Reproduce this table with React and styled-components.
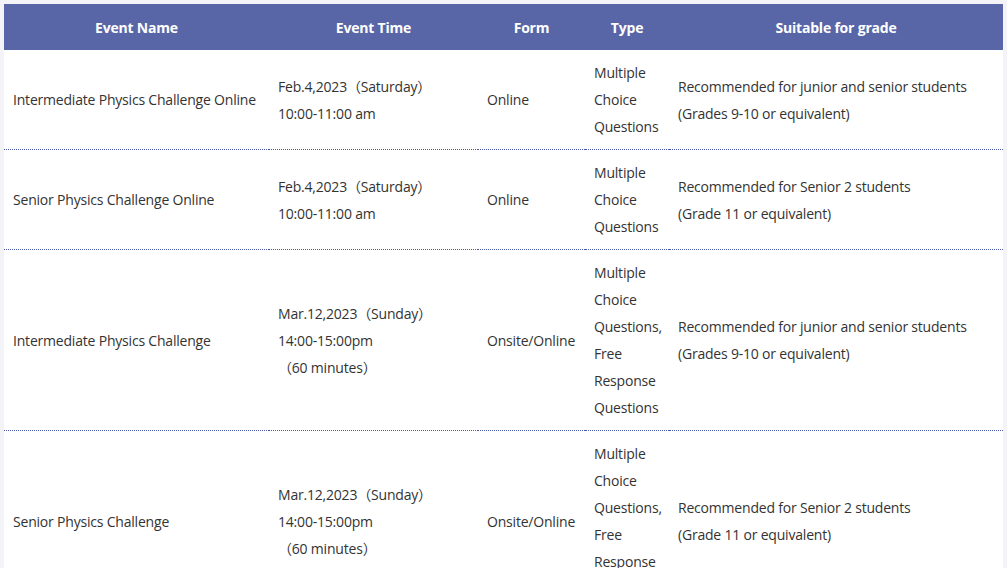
import React from 'react'
import styled, { createGlobalStyle } from 'styled-components'

const GlobalStyle = createGlobalStyle`
    body {
        margin: 4px;
        background: #f3f3f8;
        font-family: "Open Sans", "Noto Sans", "Noto Sans CJK SC", sans-serif;
    }
`

const Table = styled.table`
    width: 999px;
    border-collapse: collapse;
    table-layout: fixed;
    background: #ffffff;
    font-size: 14px;
    letter-spacing: -0.2px;
    color: #333333;
`

const HeadCell = styled.th`
    box-sizing: border-box;
    width: ${(p) => p.w}px;
    height: 46px;
    padding: 0 9px;
    background: #5866a8;
    color: #ffffff;
    font-weight: bold;
    text-align: center;
    vertical-align: middle;
`

const Cell = styled.td`
    padding: 9px;
    line-height: 27px;
    vertical-align: middle;
    border-bottom: 1px dotted #4a5aa8;
`

const columns = [
    { title: 'Event Name', w: 265 },
    { title: 'Event Time', w: 209 },
    { title: 'Form', w: 107 },
    { title: 'Type', w: 84 },
    { title: 'Suitable for grade', w: 334 }
]

const mcq = ['Multiple', 'Choice', 'Questions']
const mcqFree = ['Multiple', 'Choice', 'Questions,', 'Free', 'Response', 'Questions']
const juniors = ['Recommended for junior and senior students', '(Grades 9-10 or equivalent)']
const seniors = ['Recommended for Senior 2 students', '(Grade 11 or equivalent)']

const events = [
    {
        name: 'Intermediate Physics Challenge Online',
        time: ['Feb.4,2023（Saturday）', '10:00-11:00 am'],
        form: 'Online',
        type: mcq,
        grade: juniors
    },
    {
        name: 'Senior Physics Challenge Online',
        time: ['Feb.4,2023（Saturday）', '10:00-11:00 am'],
        form: 'Online',
        type: mcq,
        grade: seniors
    },
    {
        name: 'Intermediate Physics Challenge',
        time: ['Mar.12,2023（Sunday）', '14:00-15:00pm', '（60 minutes）'],
        form: 'Onsite/Online',
        type: mcqFree,
        grade: juniors
    },
    {
        name: 'Senior Physics Challenge',
        time: ['Mar.12,2023（Sunday）', '14:00-15:00pm', '（60 minutes）'],
        form: 'Onsite/Online',
        type: mcqFree,
        grade: seniors
    }
]

const Lines = ({ items }) =>
    items.map((line, i) => (
        <React.Fragment key={i}>
            {i > 0 && <br />}
            {line}
        </React.Fragment>
    ))

const App = () => {
    return (
        <>
            <GlobalStyle />
            <Table>
                <thead>
                    <tr>
                        {columns.map((c) => (
                            <HeadCell key={c.title} w={c.w}>
                                {c.title}
                            </HeadCell>
                        ))}
                    </tr>
                </thead>
                <tbody>
                    {events.map((e, i) => (
                        <tr key={i}>
                            <Cell>{e.name}</Cell>
                            <Cell>
                                <Lines items={e.time} />
                            </Cell>
                            <Cell>{e.form}</Cell>
                            <Cell>
                                <Lines items={e.type} />
                            </Cell>
                            <Cell>
                                <Lines items={e.grade} />
                            </Cell>
                        </tr>
                    ))}
                </tbody>
            </Table>
        </>
    )
}

export default App
